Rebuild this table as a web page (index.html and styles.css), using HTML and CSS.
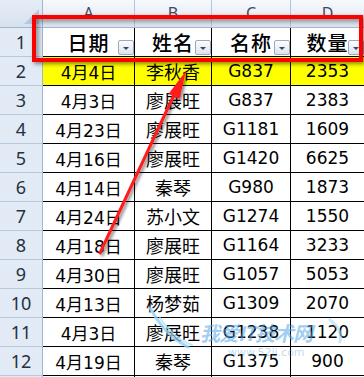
FILE: index.html
```html
<!DOCTYPE html>
<html lang="zh">
<head>
<meta charset="utf-8">
<link rel="stylesheet" href="styles.css">
</head>
<body>
<div class="page">
  <div class="sheet">
    <div class="cell corner"><span class="tri"></span></div>
    <div class="cell ch">A</div>
    <div class="cell ch">B</div>
    <div class="cell ch">C</div>
    <div class="cell ch">D</div>

    <div class="cell rh">1</div>
    <div class="cell hd">日期<span class="dd"></span></div>
    <div class="cell hd">姓名<span class="dd"></span></div>
    <div class="cell hd">名称<span class="dd"></span></div>
    <div class="cell hd">数量<span class="dd"></span></div>

    <div class="cell rh">2</div>
    <div class="cell d hl">4月4日</div>
    <div class="cell d nm hl">李秋香</div>
    <div class="cell d hl">G837</div>
    <div class="cell d hl">2353</div>

    <div class="cell rh">3</div>
    <div class="cell d">4月3日</div>
    <div class="cell d nm">廖展旺</div>
    <div class="cell d">G837</div>
    <div class="cell d">2383</div>

    <div class="cell rh">4</div>
    <div class="cell d">4月23日</div>
    <div class="cell d nm">廖展旺</div>
    <div class="cell d">G1181</div>
    <div class="cell d">1609</div>

    <div class="cell rh">5</div>
    <div class="cell d">4月16日</div>
    <div class="cell d nm">廖展旺</div>
    <div class="cell d">G1420</div>
    <div class="cell d">6625</div>

    <div class="cell rh">6</div>
    <div class="cell d">4月14日</div>
    <div class="cell d nm">秦琴</div>
    <div class="cell d">G980</div>
    <div class="cell d">1873</div>

    <div class="cell rh">7</div>
    <div class="cell d">4月24日</div>
    <div class="cell d nm">苏小文</div>
    <div class="cell d">G1274</div>
    <div class="cell d">1550</div>

    <div class="cell rh">8</div>
    <div class="cell d">4月18日</div>
    <div class="cell d nm">廖展旺</div>
    <div class="cell d">G1164</div>
    <div class="cell d">3233</div>

    <div class="cell rh">9</div>
    <div class="cell d">4月30日</div>
    <div class="cell d nm">廖展旺</div>
    <div class="cell d">G1057</div>
    <div class="cell d">5053</div>

    <div class="cell rh">10</div>
    <div class="cell d">4月13日</div>
    <div class="cell d nm">杨梦茹</div>
    <div class="cell d">G1309</div>
    <div class="cell d">2070</div>

    <div class="cell rh">11</div>
    <div class="cell d">4月3日</div>
    <div class="cell d nm">廖展旺</div>
    <div class="cell d">G1238</div>
    <div class="cell d">1120</div>

    <div class="cell rh">12</div>
    <div class="cell d">4月19日</div>
    <div class="cell d nm">秦琴</div>
    <div class="cell d">G1375</div>
    <div class="cell d">900</div>

    <div class="cell rh"></div>
    <div class="cell d"></div>
    <div class="cell d"></div>
    <div class="cell d"></div>
    <div class="cell d"></div>
  </div>

  <div class="redbox"></div>

  <div class="wm">我爱IT技术网</div>
  <div class="wm-url">www.52ij.com</div>

  <svg class="overlay" width="364" height="377" viewBox="0 0 364 377">
    <defs>
      <filter id="sh" x="-20%" y="-20%" width="140%" height="140%">
        <feDropShadow dx="2" dy="2" stdDeviation="1.5" flood-color="#000" flood-opacity="0.45"/>
      </filter>
    </defs>
    <path d="M150 308 C160 325 170 338 188 347" fill="none" stroke="#8fd0f4" stroke-width="3" stroke-linecap="round" opacity="0.8"/>
    <path d="M160 318 C170 332 178 340 192 345" fill="none" stroke="#b9e2f8" stroke-width="2" stroke-linecap="round" opacity="0.8"/>
    <path d="M330 320 C338 326 342 334 340 342" fill="none" stroke="#a9d8f4" stroke-width="3" stroke-linecap="round" opacity="0.6"/>
    <g filter="url(#sh)">
      <line x1="100" y1="253" x2="174" y2="95" stroke="#ff1a1a" stroke-width="3" stroke-linecap="round"/>
      <polygon points="186,71 179.4,98.9 168.6,93.7" fill="#ff1a1a"/>
    </g>
  </svg>
</div>
</body>
</html>
```

FILE: styles.css
```css
html, body {
  margin: 0;
  padding: 0;
  background: #ffffff;
}

.page {
  position: relative;
  width: 364px;
  height: 377px;
  overflow: hidden;
}

.sheet {
  display: grid;
  grid-template-columns: 43px 92px 77px 79px 74px;
  grid-template-rows: 28px;
  grid-auto-rows: 29px;
  width: 365px;
}

.cell {
  box-sizing: border-box;
  border-right: 1px solid #000;
  border-bottom: 1px solid #000;
  display: flex;
  align-items: center;
  justify-content: center;
  position: relative;
  color: #000;
  font-family: "DejaVu Sans", "Noto Sans CJK SC", sans-serif;
  font-size: 17px;
  white-space: nowrap;
}

.corner {
  background: linear-gradient(#e6edf6, #d7e1ee);
  border-right: 1px solid #9eb6ce;
  border-bottom: 1px solid #9eb6ce;
}

.tri {
  position: absolute;
  right: 3px;
  bottom: 3px;
  width: 0;
  height: 0;
  border-left: 15px solid transparent;
  border-bottom: 15px solid #b9c9dc;
}

.ch {
  background: linear-gradient(#f7f9fc 0%, #eaeff6 50%, #dbe3ee 100%);
  border-right: 1px solid #b4c6da;
  border-bottom: 1px solid #9eb6ce;
  color: #3b4b60;
  font-family: "Noto Sans", sans-serif;
  font-size: 16px;
  padding-bottom: 1px;
}

.rh {
  background: #e2eaf5;
  border-right: 1px solid #9eb6ce;
  border-bottom: 1px solid #b6c8dc;
  color: #25313f;
  font-family: "Noto Sans", sans-serif;
  font-size: 18px;
}

.hd {
  font-family: "Noto Sans CJK SC", sans-serif;
  font-size: 20px;
  font-weight: 500;
  letter-spacing: 1px;
}

.dd {
  position: absolute;
  right: 0;
  bottom: 1px;
  width: 16px;
  height: 15px;
  box-sizing: border-box;
  border: 1px solid #9ea8b8;
  border-radius: 2px;
  background: linear-gradient(#fbfcfe, #dde4ee);
}

.dd::after {
  content: "";
  position: absolute;
  left: 4px;
  top: 6px;
  width: 0;
  height: 0;
  border-left: 3px solid transparent;
  border-right: 3px solid transparent;
  border-top: 3px solid #3c4658;
}

.nm {
  font-family: "Noto Sans CJK SC", sans-serif;
  font-size: 18px;
}

.hl {
  background: #ffff00;
}

.redbox {
  position: absolute;
  left: 32px;
  top: 15px;
  width: 331px;
  height: 47px;
  box-sizing: border-box;
  border: 4px solid #ff0000;
  box-shadow: 2px 2px 4px rgba(0, 0, 0, 0.45), inset 3px 3px 4px rgba(0, 0, 0, 0.35);
}

.wm {
  position: absolute;
  left: 200px;
  top: 320px;
  font-family: "Noto Sans CJK SC", sans-serif;
  font-size: 20px;
  font-weight: 700;
  font-style: italic;
  color: rgba(80, 165, 230, 0.55);
  letter-spacing: -1px;
  line-height: 26px;
}

.wm-url {
  position: absolute;
  left: 228px;
  top: 346px;
  font-family: "DejaVu Sans", sans-serif;
  font-size: 11px;
  color: rgba(110, 170, 225, 0.45);
  line-height: 14px;
}

.overlay {
  position: absolute;
  left: 0;
  top: 0;
  pointer-events: none;
}
```
